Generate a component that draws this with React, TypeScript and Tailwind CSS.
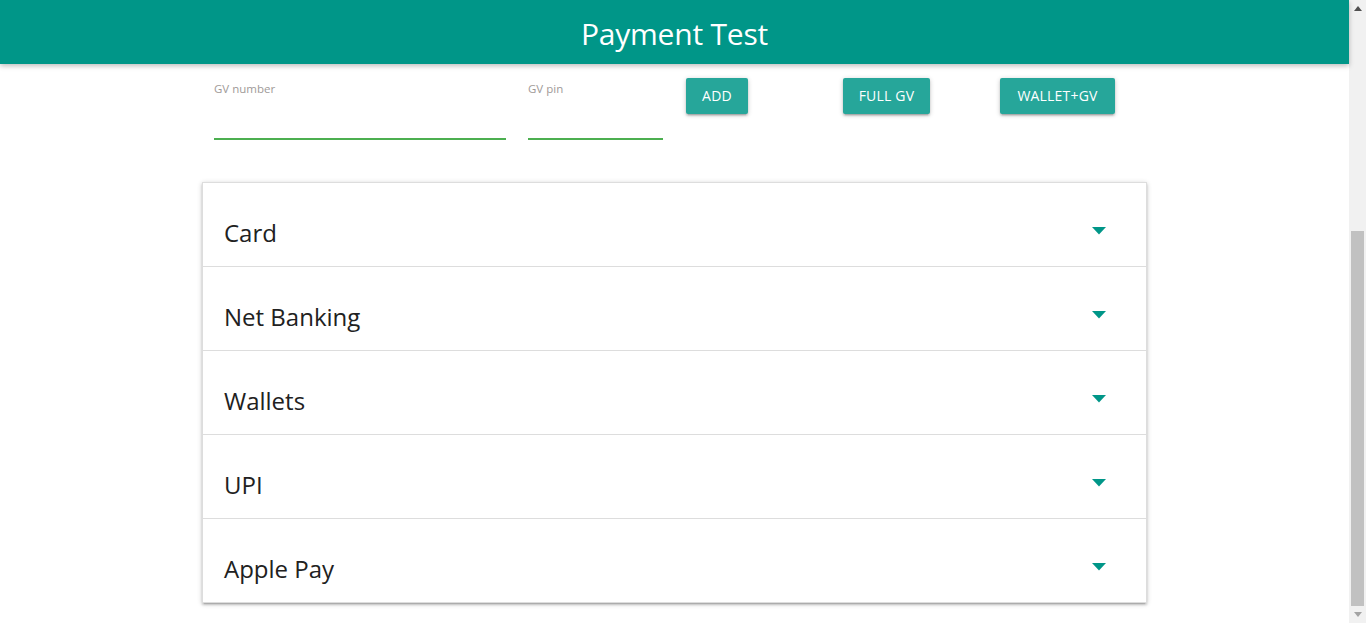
import React from "react";

const rows = ["Card", "Net Banking", "Wallets", "UPI", "Apple Pay"];

function Arrow() {
  return (
    <svg width="14" height="8" viewBox="0 0 14 8" className="block">
      <polygon points="0,0 14,0 7,7.5" fill="#009688" />
    </svg>
  );
}

const btn =
  "h-[36px] pb-[2px] rounded-[2px] bg-[#26a69a] text-white text-[14px] tracking-[0.2px] shadow-[0_2px_2px_rgba(0,0,0,0.14),0_3px_1px_-2px_rgba(0,0,0,0.12),0_1px_5px_rgba(0,0,0,0.2)]";

export default function App() {
  const font = { fontFamily: '"Open Sans", "Noto Sans", sans-serif' };
  return (
    <div className="flex h-[623px] w-[1366px] overflow-hidden bg-white" style={font}>
      <div className="flex-1 flex flex-col">
        <header className="relative z-10 h-[64px] bg-[#009688] shadow-[0_2px_5px_rgba(0,0,0,0.26)] flex items-center justify-center pt-[3px]">
          <h1 className="text-white text-[30px] leading-none font-normal tracking-[-0.2px]">Payment Test</h1>
        </header>
        <div className="w-[945px] mx-auto">
          <div className="flex items-start pl-[12px] pt-[14px]">
            <div className="w-[292px] pt-[4px]">
              <div className="text-[11.5px] leading-[14px] text-[#a09a98]">GV number</div>
              <div className="h-[44px] border-b-2 border-[#4caf50]"></div>
            </div>
            <div className="w-[135px] ml-[22px] pt-[4px]">
              <div className="text-[11.5px] leading-[14px] text-[#a09a98]">GV pin</div>
              <div className="h-[44px] border-b-2 border-[#4caf50]"></div>
            </div>
            <div className="ml-[23px] w-[157px]">
              <button className={btn + " w-[62px]"}>ADD</button>
            </div>
            <div className="w-[157px]">
              <button className={btn + " w-[87px]"}>FULL GV</button>
            </div>
            <div>
              <button className={btn + " w-[115px]"}>WALLET+GV</button>
            </div>
          </div>
          <div className="mt-[42px] border border-[#ddd] border-b-0 shadow-[0_2px_2px_rgba(0,0,0,0.14),0_3px_1px_-2px_rgba(0,0,0,0.12),0_1px_5px_rgba(0,0,0,0.2)]">
            {rows.map((r) => (
              <div key={r} className="h-[84px] border-b border-[#ddd] flex items-center justify-between pl-[21px] pr-[40px]">
                <span className="text-[24px] text-[#212121] pt-[16px]">{r}</span>
                <span className="pt-[12px]"><Arrow /></span>
              </div>
            ))}
          </div>
        </div>
      </div>
      <div className="w-[17px] h-full bg-[#f1f1f1] flex flex-col items-center">
        <div className="h-[17px] flex items-center justify-center">
          <svg width="8" height="5" viewBox="0 0 8 5"><polygon points="0,5 8,5 4,0" fill="#505050" /></svg>
        </div>
        <div className="h-[214px]"></div>
        <div className="w-[13px] h-[375px] bg-[#c1c1c1]"></div>
        <div className="flex-1 flex items-center justify-center">
          <svg width="8" height="5" viewBox="0 0 8 5"><polygon points="0,0 8,0 4,5" fill="#a3a3a3" /></svg>
        </div>
      </div>
    </div>
  );
}
